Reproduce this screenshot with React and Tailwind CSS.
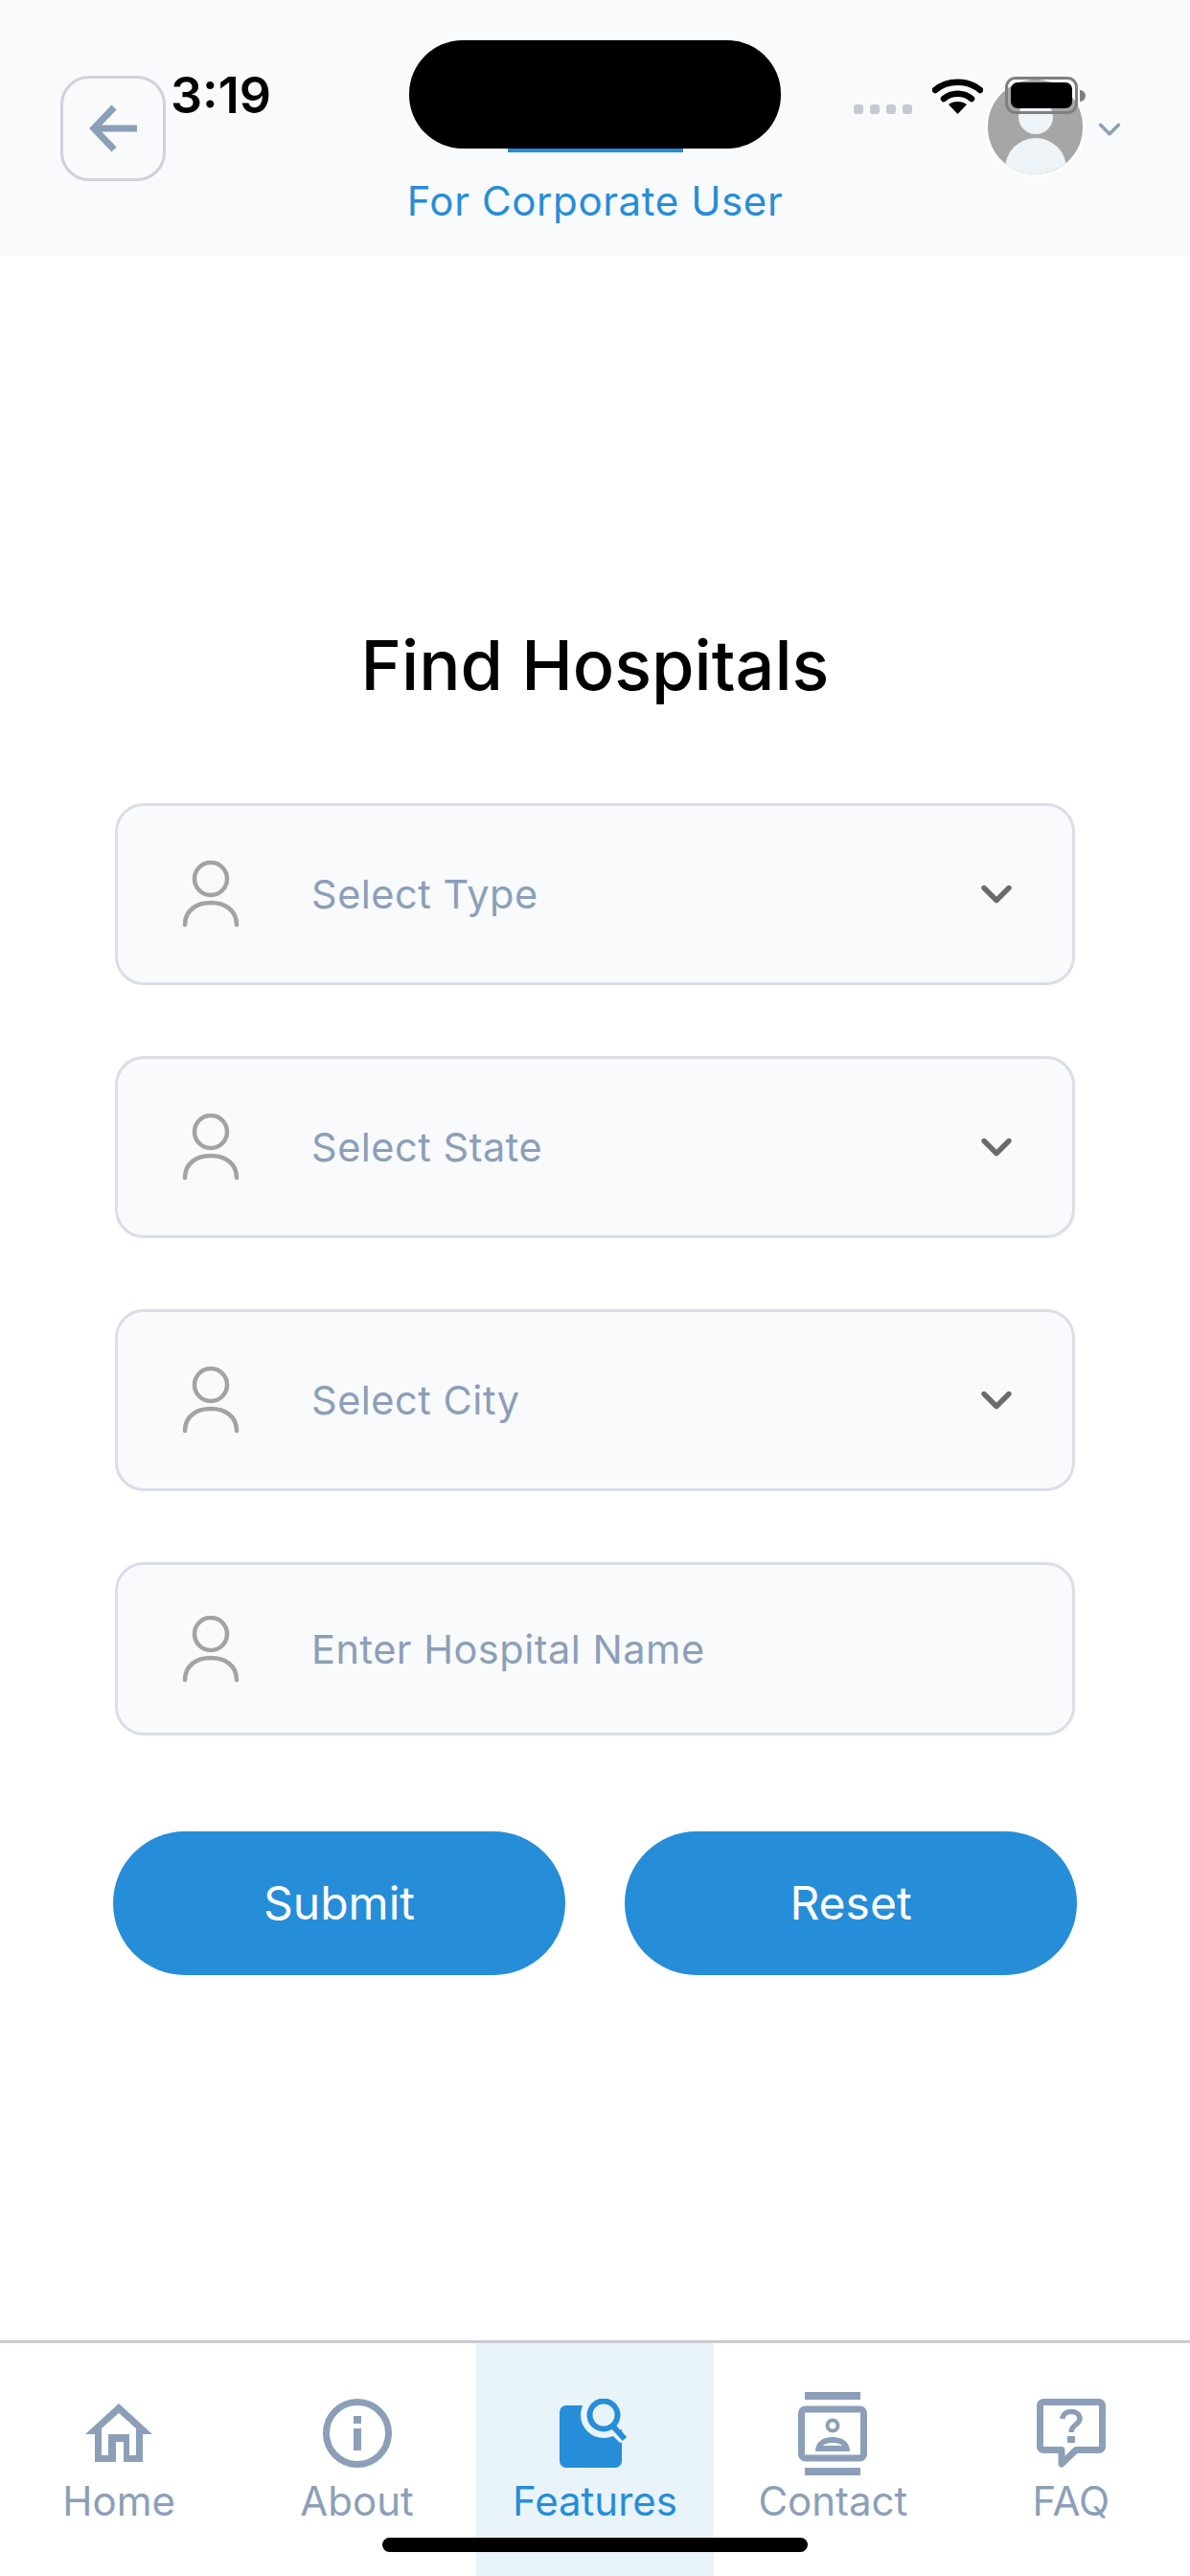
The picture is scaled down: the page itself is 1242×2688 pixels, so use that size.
import { ChevronDown } from "lucide-react";

const fields = [
  { label: "Select Type", select: true },
  { label: "Select State", select: true },
  { label: "Select City", select: true },
  { label: "Enter Hospital Name", select: false },
];

function BackIcon() {
  return (
    <svg width="50" height="50" viewBox="0 0 50 50" fill="none" stroke="#8c9fb8" strokeWidth="7">
      <path d="M50 25H5" />
      <path d="M26 3L5 25L26 47" />
    </svg>
  );
}

function UserIcon() {
  return (
    <svg width="60" height="70" viewBox="0 0 60 70" fill="none" stroke="#a3a3a3" strokeWidth="4.5" strokeLinecap="round">
      <circle cx="30" cy="19" r="17" />
      <path d="M3 67C3 52 15 44 30 44C45 44 57 52 57 67" />
    </svg>
  );
}

function HomeIcon() {
  return (
    <svg width="70" height="62" viewBox="0 0 70 62" fill="#8c9fb8">
      <path
        fillRule="evenodd"
        d="M35 0L70 32H60V61H40V40H32V61H10V32H0ZM35 10L17 26V54H24V32H46V54H53V26Z"
      />
    </svg>
  );
}

function AboutIcon() {
  return (
    <svg width="72" height="72" viewBox="0 0 72 72" fill="none">
      <circle cx="36" cy="36" r="32.5" stroke="#8c9fb8" strokeWidth="7" />
      <rect x="32" y="18" width="8" height="8" fill="#8c9fb8" />
      <rect x="32" y="31" width="8" height="23" fill="#8c9fb8" />
    </svg>
  );
}

function FeaturesIcon() {
  return (
    <svg width="74" height="72" viewBox="0 0 74 72">
      <rect x="0" y="7" width="65" height="65" rx="7" fill="#268dd8" />
      <circle cx="46" cy="17" r="24" fill="#e8f3fa" />
      <path d="M58 28L71 43L63 46L52 35Z" fill="#e8f3fa" />
      <circle cx="46" cy="17" r="14.5" fill="none" stroke="#268dd8" strokeWidth="6" />
      <path d="M56 29L68 42" stroke="#268dd8" strokeWidth="6" />
    </svg>
  );
}

function ContactIcon() {
  return (
    <svg width="72" height="87" viewBox="0 0 72 87" fill="none">
      <rect x="7" y="0" width="58" height="8" fill="#8c9fb8" />
      <rect x="3.5" y="18" width="65" height="51" rx="4" stroke="#8c9fb8" strokeWidth="7" />
      <circle cx="36" cy="35" r="5.5" stroke="#8c9fb8" strokeWidth="4" />
      <path fillRule="evenodd" d="M18 62C18 52 26 47 36 47C46 47 54 52 54 62ZM26 56H46C43 52 29 52 26 56Z" fill="#8c9fb8" />
      <rect x="7" y="79" width="58" height="8" fill="#8c9fb8" />
    </svg>
  );
}

function FaqIcon() {
  return (
    <svg width="72" height="72" viewBox="0 0 72 72" fill="none">
      <path
        d="M7 3.5H65A3.5 3.5 0 0 1 68.5 7V50A3.5 3.5 0 0 1 65 53.5H41L26 68V53.5H7A3.5 3.5 0 0 1 3.5 50V7A3.5 3.5 0 0 1 7 3.5Z"
        stroke="#8c9fb8"
        strokeWidth="7"
        strokeLinejoin="round"
      />
      <path d="M27 21C27 11 45 11 45 21C45 27 36 27 36 35" stroke="#8c9fb8" strokeWidth="5.5" />
      <rect x="32" y="39" width="8" height="7" fill="#8c9fb8" />
    </svg>
  );
}

const tabs = [
  { label: "Home", icon: <HomeIcon /> },
  { label: "About", icon: <AboutIcon /> },
  { label: "Features", icon: <FeaturesIcon />, active: true },
  { label: "Contact", icon: <ContactIcon /> },
  { label: "FAQ", icon: <FaqIcon /> },
];

function StatusBar() {
  return (
    <>
      <span className="absolute left-[178px] top-[69px] text-[52px] leading-[62px] font-semibold text-black">3:19</span>
      <div className="absolute left-[427px] top-[42px] w-[388px] h-[113px] rounded-[56px] bg-black" />
      <div className="absolute left-[891px] top-[109px] flex gap-[7px]">
        <div className="w-[10px] h-[10px] rounded-[3px] bg-[#c5c9d3]" />
        <div className="w-[10px] h-[10px] rounded-[3px] bg-[#c5c9d3]" />
        <div className="w-[10px] h-[10px] rounded-[3px] bg-[#c5c9d3]" />
        <div className="w-[10px] h-[10px] rounded-[3px] bg-[#c5c9d3]" />
      </div>
      <svg className="absolute left-[973px] top-[81px]" width="53" height="38" viewBox="0 0 53 38" fill="none">
        <path d="M3 13C16 2 37 2 50 13" stroke="#000" strokeWidth="6.5" strokeLinecap="round" />
        <path d="M12 22C20 15 33 15 41 22" stroke="#000" strokeWidth="6.5" strokeLinecap="round" />
        <path d="M17 28C22 24 31 24 36 28L26.5 38Z" fill="#000" />
      </svg>
      <div className="absolute left-[1049px] top-[80px] w-[76px] h-[39px] rounded-[11px] border-[3px] border-[#7f7f7f] p-[3px]">
        <div className="w-full h-full rounded-[7px] bg-black" />
      </div>
      <div className="absolute left-[1127px] top-[94px] w-[6px] h-[12px] rounded-r-[6px] bg-[#7f7f7f]" />
    </>
  );
}

export default function App() {
  return (
    <div className="relative flex flex-col h-[2688px] bg-white font-['Inter',sans-serif] overflow-hidden">
      <header className="relative h-[267px] shrink-0 bg-[#f9fafc] grid grid-cols-[1fr_auto_1fr]">
        <div>
          <button className="ml-[63px] mt-[79px] w-[110px] h-[110px] rounded-[30px] border-[3px] border-[#cfd1db] flex items-center justify-center">
            <BackIcon />
          </button>
        </div>

        <div className="pt-[155px] flex flex-col items-center">
          <div className="w-[183px] h-[4px] bg-[#268dd8]" />
          <span className="mt-[26px] text-[#268dd8] text-[42px] leading-[50px] tracking-[0.6px]">For Corporate User</span>
        </div>

        <div className="flex justify-end items-start pr-[65px] pt-[80px]">
          <div className="relative w-[105px] h-[105px] rounded-full bg-[#a6a6a6] overflow-hidden border-[3px] border-white">
            <div className="absolute left-[32px] top-[21px] w-[36px] h-[36px] rounded-full bg-[#edf3f7]" />
            <div className="absolute left-[18px] top-[61px] w-[64px] h-[64px] rounded-full bg-[#edf3f7]" />
          </div>
          <ChevronDown className="ml-[6px] mt-[36px]" size={38} color="#8c9fb8" strokeWidth={2.2} />
        </div>

        <StatusBar />
      </header>

      <main className="flex-1 px-[120px] pt-[387px]">
        <h1 className="text-center text-[72px] leading-[80px] font-medium text-black">Find Hospitals</h1>

        <div className="mt-[104px] flex flex-col gap-[74px]">
          {fields.map((f) => (
            <div
              key={f.label}
              className={
                "flex items-center pl-[67px] pr-[53px] rounded-[30px] border-[3px] border-[#dcdde9] bg-[#f9fafc] " +
                (f.select ? "h-[190px]" : "h-[181px]")
              }
            >
              <UserIcon />
              <span className="ml-[75px] flex-1 text-[41.5px] leading-[50px] text-[#8c9fb8] tracking-[0.5px]">{f.label}</span>
              {f.select ? <ChevronDown size={52} color="#6b6b6b" strokeWidth={2.5} /> : null}
            </div>
          ))}
        </div>

        <div className="mt-[100px] -mx-[2px] grid grid-cols-2 gap-[62px]">
          <button className="h-[150px] rounded-[75px] bg-[#268dd8] text-white text-[48px]">Submit</button>
          <button className="h-[150px] rounded-[75px] bg-[#268dd8] text-white text-[48px]">Reset</button>
        </div>
      </main>

      <nav className="h-[246px] shrink-0 border-t-[3px] border-[#c8cad2] grid grid-cols-5">
        {tabs.map((t) => (
          <div key={t.label} className={"flex flex-col items-center pt-[49px] " + (t.active ? "bg-[#e8f3fa]" : "")}>
            <div className="h-[90px] flex items-center justify-center">{t.icon}</div>
            <span className={"mt-[1px] text-[42px] leading-[50px] " + (t.active ? "text-[#268dd8]" : "text-[#8c9fb8]")}>
              {t.label}
            </span>
          </div>
        ))}
      </nav>

      <div className="absolute left-[399px] top-[2648px] w-[444px] h-[15px] rounded-full bg-black" />
    </div>
  );
}
